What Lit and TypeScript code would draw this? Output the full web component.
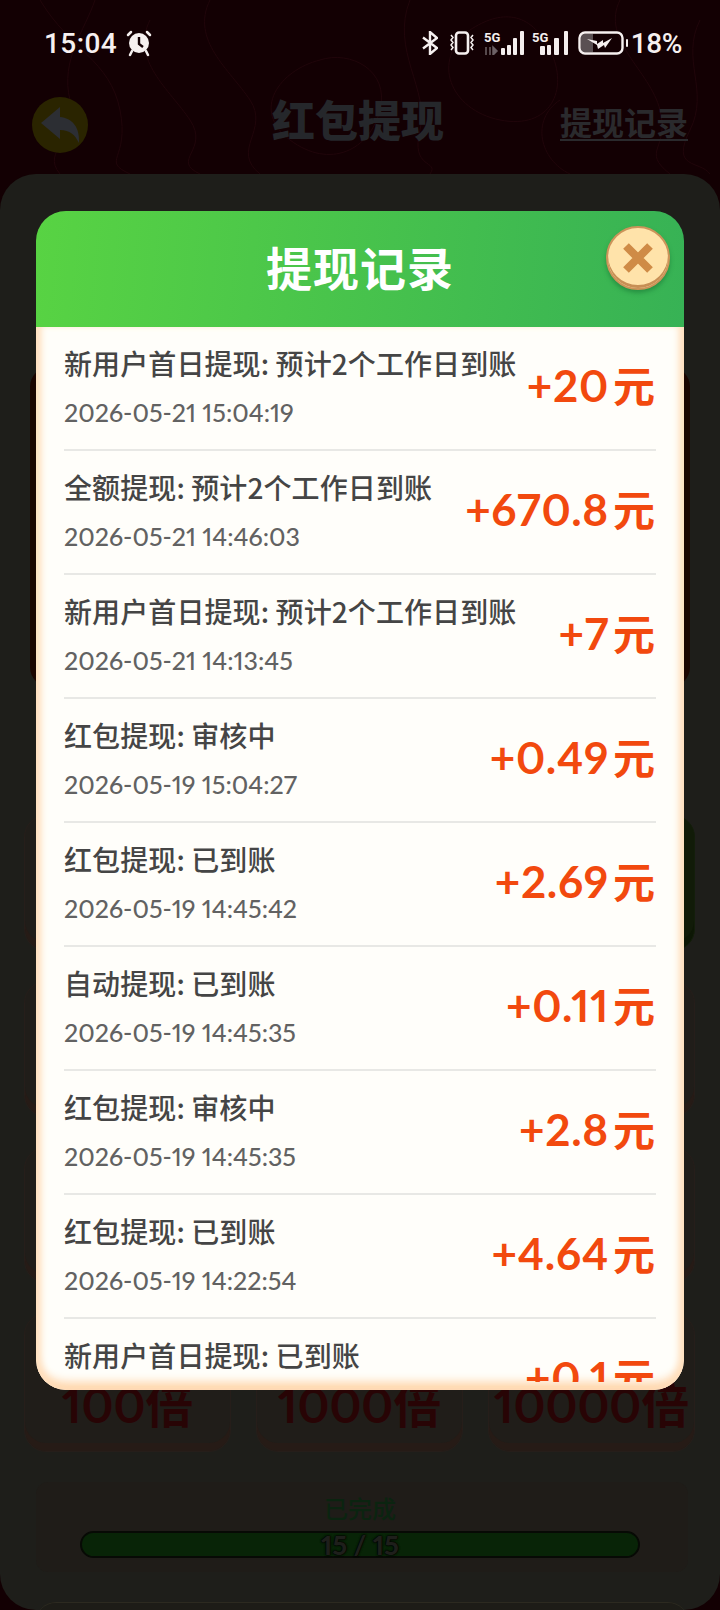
import { LitElement, html, css, svg } from 'lit';
import { customElement } from 'lit/decorators.js';

// lista de registos do modal
const records = [
  { title: '新用户首日提现: 预计2个工作日到账', time: '2026-05-21 15:04:19', amount: '+20' },
  { title: '全额提现: 预计2个工作日到账', time: '2026-05-21 14:46:03', amount: '+670.8' },
  { title: '新用户首日提现: 预计2个工作日到账', time: '2026-05-21 14:13:45', amount: '+7' },
  { title: '红包提现: 审核中', time: '2026-05-19 15:04:27', amount: '+0.49' },
  { title: '红包提现: 已到账', time: '2026-05-19 14:45:42', amount: '+2.69' },
  { title: '自动提现: 已到账', time: '2026-05-19 14:45:35', amount: '+0.11' },
  { title: '红包提现: 审核中', time: '2026-05-19 14:45:35', amount: '+2.8' },
  { title: '红包提现: 已到账', time: '2026-05-19 14:22:54', amount: '+4.64' },
  { title: '新用户首日提现: 已到账', time: '2026-05-19 14:22:50', amount: '+0.1' },
];

const bar = (x: number, y: number, w: number) =>
  svg`<rect x=${x} y=${y} width=${w} height=${24 - y} rx="1" fill="#f4eeee" />`;

@customElement('app-root')
export class AppRoot extends LitElement {
  static styles = css`
    :host {
      display: block;
      position: relative;
      width: 720px;
      height: 1610px;
      overflow: hidden;
      background: #130003;
      font-family: 'Noto Sans CJK SC', 'Lato', sans-serif;
    }

    .contours {
      position: absolute;
      top: 0;
      left: 0;
    }

    .status {
      position: relative;
      height: 80px;
      display: flex;
      align-items: center;
      padding: 6px 38px 0 44px;
      box-sizing: border-box;
      color: #f6f0f0;
      font-family: 'Roboto', sans-serif;
      font-size: 28px;
      font-weight: 500;
    }

    .clock {
      margin-right: 9px;
      letter-spacing: 0.4px;
    }

    .status-right {
      margin-left: auto;
      display: flex;
      align-items: center;
    }

    .five {
      font: 700 13px 'Roboto', sans-serif;
      fill: #f4eeee;
    }

    .bt {
      margin-right: 10px;
    }

    .vib {
      margin-right: 8px;
    }

    .sig-a {
      margin-right: 7px;
    }

    .sig-b {
      margin-right: 9px;
    }

    .pct {
      margin-left: 3px;
      letter-spacing: -0.4px;
    }

    .topbar {
      position: relative;
      height: 94px;
      display: flex;
      align-items: center;
      padding: 0 32px 4px;
      box-sizing: border-box;
    }

    .back {
      width: 56px;
      height: 56px;
      border-radius: 50%;
      background: #2a2400;
      display: flex;
      align-items: center;
      justify-content: center;
    }

    .page-title {
      position: absolute;
      left: 272px;
      top: 8px;
      font-size: 43px;
      line-height: 60px;
      font-weight: 900;
      color: #25272b;
    }

    .history-link {
      margin-left: auto;
      font-size: 32px;
      line-height: 36px;
      font-weight: 700;
      color: #2a2a2d;
      border-bottom: 2px solid #2a2a2d;
      margin-bottom: 6px;
    }

    .panel {
      position: relative;
      background: #1e1e1a;
      border-radius: 36px;
      height: 1436px;
      padding: 0 24px;
      box-sizing: border-box;
    }

    .red-card {
      height: 320px;
      margin: 0 6px;
      position: relative;
      top: 193px;
      border-radius: 20px;
      background: #1c0500;
    }

    .grid {
      margin-top: 321px;
      display: grid;
      grid-template-columns: repeat(3, 207px);
      grid-auto-rows: 136px;
      column-gap: 25px;
      row-gap: 30px;
    }

    .tile {
      border-radius: 22px;
      background: #201d19;
      border: 1px solid #261e1a;
      box-shadow: inset 0 -8px 0 #261b16;
      box-sizing: border-box;
      display: flex;
      align-items: flex-end;
      justify-content: center;
      white-space: nowrap;
    }

    .tile.green {
      background: #111b08;
      box-shadow: inset 0 -8px 0 #0d1705;
      border-color: #131e0a;
    }

    .tile.last {
      height: 139px;
      font-family: 'Lato', 'Noto Sans CJK SC', sans-serif;
      font-variant-numeric: proportional-nums;
      font-size: 48px;
      line-height: 60px;
      font-weight: 700;
      color: #280405;
      padding-bottom: 16px;
    }

    .progress {
      margin: 33px 8px 0 12px;
      padding-right: 4px;
      height: 90px;
      border-radius: 12px;
      background: #1f1c18;
      display: flex;
      flex-direction: column;
      align-items: center;
    }

    .progress-label {
      margin-top: 10px;
      font-size: 24px;
      line-height: 32px;
      font-weight: 500;
      color: #0b2410;
    }

    .bar {
      margin-top: 7px;
      width: 560px;
      height: 27px;
      box-sizing: border-box;
      border: 2px solid #070a05;
      border-radius: 14px;
      background: #082407;
      text-align: center;
      font-family: 'Lato', sans-serif;
      font-variant-numeric: proportional-nums;
      font-size: 27px;
      line-height: 23px;
      font-weight: 900;
      color: #1e1f1b;
      text-shadow: 0 0 2px #000, 0 0 2px #000, 0 0 1px #000;
    }

    .bottom-card {
      margin: 30px 8px 0 12px;
      height: 60px;
      border-top: 1px solid #2c2a20;
      border-radius: 20px 20px 0 0;
      background: #1d1c17;
    }

    .modal {
      position: absolute;
      left: 36px;
      top: 211px;
      width: 648px;
      height: 1179px;
      border-radius: 30px;
      overflow: hidden;
      display: flex;
      flex-direction: column;
    }

    .modal-head {
      height: 116px;
      flex: none;
      box-sizing: border-box;
      padding-bottom: 6px;
      background: linear-gradient(95deg, #58d343, #37b255);
      display: flex;
      align-items: center;
      justify-content: center;
      color: #fff;
      font-size: 46px;
      letter-spacing: 1px;
      font-weight: 700;
    }

    .modal-body {
      flex: 1;
      min-height: 0;
      background: #fffefa;
      border-radius: 0 0 30px 30px;
      box-shadow: inset 8px 0 7px -3px #ffe0bf, inset -8px 0 7px -3px #ffe0bf, inset 0 -10px 10px -2px #ffd6ac;
      padding: 0 28px 8px;
      display: flex;
    }

    .list {
      flex: 1;
      overflow: hidden;
    }

    .row {
      height: 124px;
      box-sizing: border-box;
      padding-top: 18px;
      border-bottom: 2px solid #e8e8e5;
      display: flex;
      justify-content: space-between;
      white-space: nowrap;
    }

    .row-title {
      font-size: 28px;
      line-height: 36px;
      font-weight: 500;
      letter-spacing: 0.1px;
      color: #454545;
    }

    .row-time {
      margin-top: 13px;
      font-family: 'Lato', sans-serif;
      font-variant-numeric: proportional-nums;
      font-size: 25px;
      line-height: 36px;
      font-weight: 500;
      color: #626262;
    }

    .amount {
      font-family: 'Lato', 'Noto Sans CJK SC', sans-serif;
      font-variant-numeric: proportional-nums;
      font-size: 44px;
      line-height: 52px;
      font-weight: 700;
      letter-spacing: 0.7px;
      color: #f2490e;
      margin-top: 13px;
      margin-right: 1px;
    }

    .yuan {
      font-family: 'Noto Sans CJK SC', sans-serif;
      font-size: 42px;
      font-weight: 700;
      letter-spacing: 0;
      margin-left: 4px;
    }

    .close {
      position: absolute;
      left: 606px;
      top: 226px;
      width: 64px;
      height: 64px;
      border-radius: 50%;
      box-sizing: border-box;
      background: #ffe3aa;
      border: 2px solid #cc945a;
      box-shadow: inset 0 -3px 0 #c78f55, 0 3px 4px rgba(20, 110, 50, 0.5);
      display: flex;
      align-items: center;
      justify-content: center;
    }
  `;

  render() {
    return html`
      <svg class="contours" width="720" height="174" viewBox="0 0 720 174" fill="none" stroke="#20050a" stroke-width="1">
        <path d="M40 0C70 50 110 60 120 110S100 160 130 174" />
        <path d="M95 0C85 30 60 60 70 100S40 150 60 174" />
        <path d="M210 0C190 40 230 70 250 100S230 150 260 174" />
        <path d="M150 20C130 60 170 90 190 120S170 160 200 174" />
        <path d="M320 60C280 70 250 110 290 140S370 150 380 110 350 50 320 60Z" />
        <path d="M410 0C390 50 430 90 420 130S440 160 430 174" />
        <path d="M470 30C430 60 450 110 500 120S570 90 550 50 500 10 470 30Z" />
        <path d="M560 100C530 120 540 160 570 174" />
        <path d="M620 0C600 40 650 70 660 110S640 150 670 174" />
        <path d="M700 20C680 60 710 90 690 130S700 160 710 174" />
      </svg>

      <div class="status">
        <span class="clock">15:04</span>
        <svg width="26" height="28" viewBox="0 0 26 28">
          <path d="M5 3 2 6M21 3l3 3" stroke="#f6f0f0" stroke-width="2.5" stroke-linecap="round" />
          <circle cx="13" cy="14" r="10" fill="#f6f0f0" />
          <path d="M13 8v7l4 3" stroke="#130003" stroke-width="2.4" fill="none" />
          <path d="M6 22 4 26M20 22l2 4" stroke="#f6f0f0" stroke-width="2.5" stroke-linecap="round" />
        </svg>
        <div class="status-right">
          <svg class="bt" width="16" height="24" viewBox="0 0 16 24" fill="none" stroke="#f6f0f0" stroke-width="2.4">
            <path d="M1 6.5 15 17l-7 6V1l7 6L1 17.500" />
          </svg>
          <svg class="vib" width="28" height="24" viewBox="0 0 28 24" fill="none" stroke="#f6f0f0">
            <rect x="8" y="1.500" width="12" height="21" rx="3" stroke-width="2.6" />
            <path d="M3 4l2 2.500-2 2.500 2 2.500-2 2.500 2 2.500-2 2.500M25 4l-2 2.500 2 2.500-2 2.500 2 2.500-2 2.500 2 2.500" stroke-width="1.5" />
          </svg>
          <svg class="sig-a" width="41" height="24" viewBox="0 0 41 24">
            <text x="0" y="11" class="five">5G</text>
            <path d="M2 16v8M6 16v8M9 16l4 4-4 4z" stroke="#6d6266" stroke-width="1.500" fill="#6d6266" />
            ${bar(17, 17, 4)} ${bar(23, 14, 4)} ${bar(29, 7, 4)} ${bar(36, 0, 4)}
          </svg>
          <svg class="sig-b" width="37" height="24" viewBox="0 0 37 24">
            <text x="0" y="11" class="five">5G</text>
            ${bar(8, 15, 5)} ${bar(15, 14, 4)} ${bar(22, 7, 5)} ${bar(32, 0, 4)}
          </svg>
          <svg width="50" height="24" viewBox="0 0 50 24" fill="none">
            <rect x="3" y="3" width="12" height="18" fill="#5a5053" />
            <rect x="1.500" y="1.500" width="43" height="21" rx="5.500" stroke="#f6f0f0" stroke-width="2.400" />
            <path d="M9 8l10 2 0 3 6-4 0 3 9-5-7 10-1-3-6 4-1-4z" fill="#f6f0f0" />
            <rect x="48" y="8" width="2" height="8" rx="1" fill="#f6f0f0" />
          </svg>
          <span class="pct">18%</span>
        </div>
      </div>

      <div class="topbar">
        <div class="back">
          <svg width="40" height="36" viewBox="0 0 40 36">
            <path d="M1 16 20 0v10c12 1 20 10 19 26-4-8-9-13-19-13v9z" fill="#2c2e33" />
          </svg>
        </div>
        <div class="page-title">红包提现</div>
        <div class="history-link">提现记录</div>
      </div>

      <div class="panel">
        <div class="red-card"></div>
        <div class="grid">
          <div class="tile"></div>
          <div class="tile"></div>
          <div class="tile green"></div>
          <div class="tile"></div>
          <div class="tile"></div>
          <div class="tile"></div>
          <div class="tile"></div>
          <div class="tile"></div>
          <div class="tile"></div>
          <div class="tile last">100倍</div>
          <div class="tile last">1000倍</div>
          <div class="tile last">10000倍</div>
        </div>
        <div class="progress">
          <div class="progress-label">已完成</div>
          <div class="bar">15 / 15</div>
        </div>
        <div class="bottom-card"></div>
      </div>

      <div class="modal">
        <div class="modal-head">提现记录</div>
        <div class="modal-body">
          <div class="list">
            ${records.map(
              (r) => html`
                <div class="row">
                  <div>
                    <div class="row-title">${r.title}</div>
                    <div class="row-time">${r.time}</div>
                  </div>
                  <div class="amount">${r.amount}<span class="yuan">元</span></div>
                </div>
              `
            )}
          </div>
        </div>
      </div>

      <div class="close">
        <svg width="36" height="36" viewBox="0 0 36 36">
          <path d="M6 6 30 30M30 6 6 30" stroke="#cf8b46" stroke-width="8" />
        </svg>
      </div>
    `;
  }
}
